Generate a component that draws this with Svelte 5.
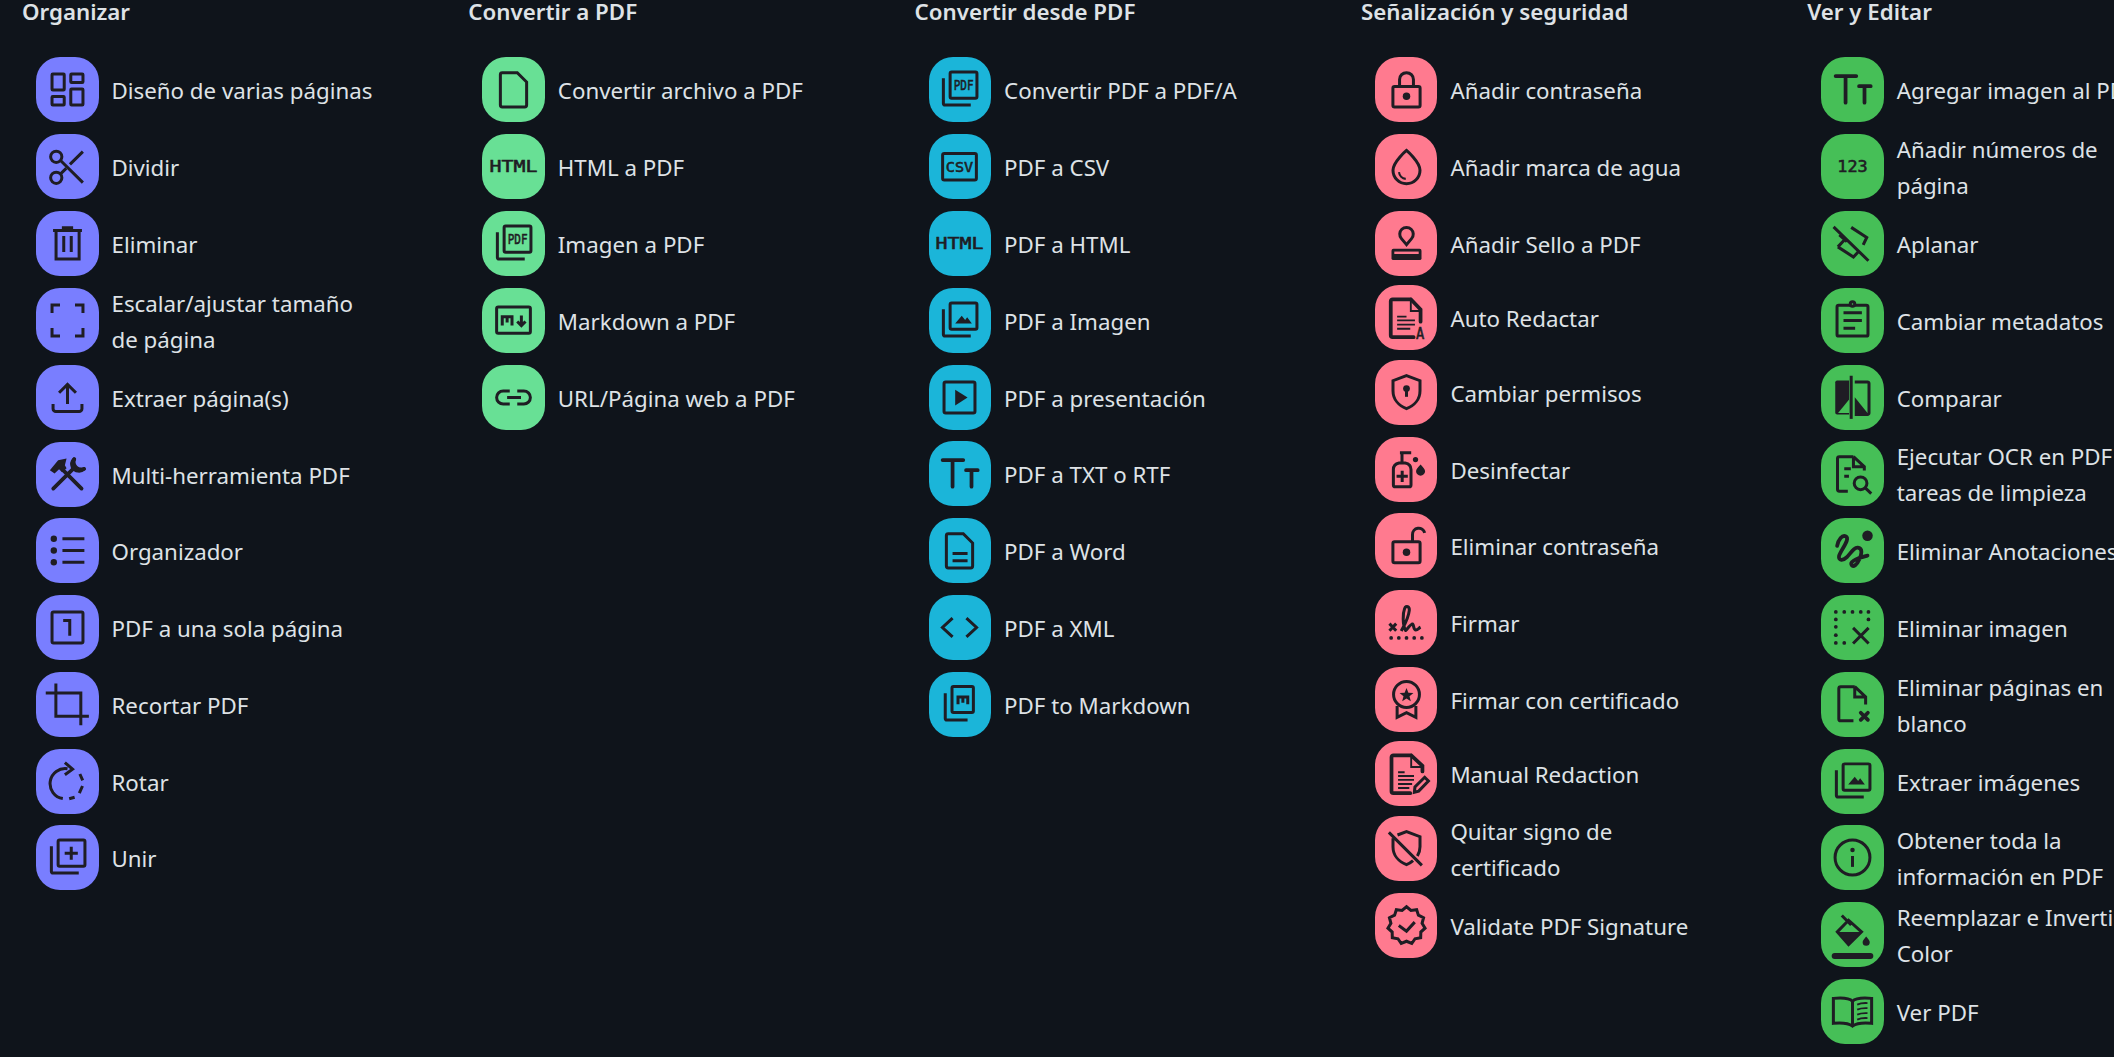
<script>
  // icons are drawn on a 24 unit grid, shown at 45px
  const stack = (inner = "") =>
    `<rect x="7" y="2.6" width="14.3" height="14" rx=".8"/><path d="M3.4 6v13.5a.8.8 0 0 0 .8.8H18"/>${inner}`;
  const mono = (s, y, len, size = 8.4, x = 12) =>
    `<text class="gl" x="${x}" y="${y}" font-size="${size}" textLength="${len}" lengthAdjust="spacingAndGlyphs">${s}</text>`;
  const doc =
    "M14 3H6a1 1 0 0 0-1 1v16.3a1 1 0 0 0 1 1h12a1 1 0 0 0 1-1V8L14 3Z";
  const shield =
    "M12 3l7.2 2.7V11c0 4.5-3 8-7.2 9.6C7.8 19 4.8 15.5 4.8 11V5.7L12 3Z";
  const textFields = `<path class="bold" d="M3 4.8h11M8.3 4.8V19M15.5 10.2h6.2M18.4 10.2V19"/>`;
  const mountain = `<path class="solid" d="M9.7 13.6l3.5-4.2 1.8 2.3 1.1-1.5 2.5 3.4Z"/>`;

  function badge() {
    let pts = [];
    for (let i = 0; i < 22; i++) {
      let r = i % 2 ? 8.4 : 10;
      let a = (i * Math.PI) / 11 - Math.PI / 2;
      pts.push((12 + r * Math.cos(a)).toFixed(2) + " " + (12 + r * Math.sin(a)).toFixed(2));
    }
    return `<path d="M${pts.join("L")}Z"/><path d="M7.9 12l4.1 3 4.4-4.8"/>`;
  }

  function dots(list) {
    return list.map(([x, y]) => `<circle class="solid" cx="${x}" cy="${y}" r="1"/>`).join("");
  }

  const icons = {
    dashboard: `<rect x="3.75" y="3.75" width="6.5" height="8.5" rx=".4"/><rect x="13.75" y="3.75" width="6.5" height="4.5" rx=".4"/><rect x="3.75" y="15.75" width="6.5" height="4.5" rx=".4"/><rect x="13.75" y="11.75" width="6.5" height="8.5" rx=".4"/>`,
    scissors: `<circle cx="6" cy="6.8" r="3"/><circle cx="6" cy="18" r="3"/><path d="M8.3 8.8L20.2 20.6M8.3 15.9l3-2.9M13.3 10.9l6.9-6.8"/>`,
    trash: `<path d="M5.9 5.2v15h12.3V5.2M4.3 5h15.4M9 3.6h6M10 8v8.5M14 8v8.5"/>`,
    cropFree: `<path d="M3.75 8V3.75H8M16 3.75h4.25V8M20.25 16v4.25H16M8 20.25H3.75V16"/>`,
    upload: `<path d="M12 15.5V5.5M7.5 9.5L12 5l4.5 4.5M4.3 15.5V18a1.5 1.5 0 0 0 1.5 1.5h12.4a1.5 1.5 0 0 0 1.5-1.5v-2.5"/>`,
    tools: `<path class="bold" d="M4.4 19.5L15 9M19.5 19.5L9.5 9.5M15.6 3.8a4 4 0 0 0 5.2 5.2"/><path class="bold" d="M15.6 3.8a4 4 0 0 0-.8 4.4a4 4 0 0 0 6 .8"/><path class="solid" d="M2.6 9.7L7 4.4l4.5-.9-.9 3.5 .9 1.6-2.4 2.2-1.6-1.6-2.4 2.3Z"/>`,
    list: `<circle class="solid" cx="4.7" cy="5.7" r="1.7"/><circle class="solid" cx="4.7" cy="12" r="1.7"/><circle class="solid" cx="4.7" cy="18.3" r="1.7"/><path d="M9.3 5.7H21M9.3 12H21M9.3 18.3H21"/>`,
    one: `<rect x="3.75" y="3.75" width="16.5" height="16.5" rx=".8"/><path d="M9.7 8.3h3.5v8.1"/>`,
    crop: `<path d="M5.8.8v17.4h17.6M.4 5.8h18.7V23"/>`,
    rotate: `<path d="M12 5.2a8 8 0 0 0-2.5 15.9M12.9 21.2l2.9-.8M18.3 18.2l1.7-3.8M20.1 11.4l-1.5-3.4M10.6 1.9l4.1 3.5-4.1 3"/>`,
    merge: stack(`<path d="M14 6.2v7M10.5 9.7h7"/>`),
    file: `<path d="${doc}"/>`,
    html: mono("HTML", 14.9, 25.6, 8.2),
    pdf: stack(mono("PDF", 12.4, 10.6, 7.6, 14.2)),
    markdown: `<rect x="3" y="4.75" width="18" height="14" rx=".9"/><path d="M6 14.6V10h5.2v4.6M8.6 10v3M16.2 9.3v5.2M14 12.5l2.2 2.2 2.2-2.2"/>`,
    link: `<path d="M10 8.5H6.5a3.5 3.5 0 0 0 0 7H10M14 8.5h3.5a3.5 3.5 0 0 1 0 7H14M8.6 12h7.4"/>`,
    csv: `<rect x="3" y="5" width="18" height="14.2" rx=".9"/>` + mono("CSV", 15, 14.6, 7.8),
    image: stack(mountain),
    slideshow: `<rect x="3.75" y="3.75" width="16.5" height="16.5" rx=".9"/><path class="solid" d="M9.7 7.9l6.6 4.1-6.6 4.3Z"/>`,
    textFields,
    word: `<path d="${doc}"/><path d="M8.3 13.6h8M8.3 17.5h8"/>`,
    code: `<path d="M8.3 7L2.9 12l5.4 5M15.7 7l5.4 5-5.4 5"/>`,
    pdfMd: `<rect x="8" y="2.4" width="11.4" height="13.8" rx=".8"/><path d="M4.4 6v13.5a.8.8 0 0 0 .8.8H16.3M11.2 11.8V8h5.2v3.8M13.8 8v3"/>`,
    lock: `<rect x="4.75" y="10.4" width="14.5" height="10.9" rx=".9"/><path d="M8.3 10.4V6.7a3.7 3.7 0 0 1 7.4 0v3.7"/><circle class="solid" cx="12" cy="15.6" r="2"/>`,
    drop: `<path d="M12 3.4S4.8 9.5 4.8 14a7.2 7.2 0 0 0 14.4 0C19.2 9.5 12 3.4 12 3.4Z"/><path d="M8 15a4 4 0 0 0 3.6 3.6" stroke-width="1.1"/>`,
    stamp: `<path d="M12 12.6L9.3 9.4a3.6 3.6 0 1 1 5.4 0Z"/><rect class="solid" x="4" y="14.8" width="16" height="6" rx="1"/><rect class="tone" x="5.5" y="16.3" width="13" height="1.3"/>`,
    autoRedact: `<path class="bold" d="M14.3 2.3H4.6a1 1 0 0 0-1 1v18.2a1 1 0 0 0 1 1h11.2M14.3 2.3l5.2 5.4v6.5"/><path class="thin" d="M14.3 2.3v6.2h5.2M7 11.5h5M7 13.5h9.5M7 15.8h9.5M7 18h7"/>` + mono("A", 23.6, 4.4, 8.2, 19.2),
    shieldKey: `<path d="${shield}"/><circle class="solid" cx="12" cy="9.9" r="1.8"/><path class="solid" d="M11.2 10h1.6v4.3h-1.6Z"/>`,
    sanitizer: `<path d="M6 21.2a1 1 0 0 1-1-1V12c0-2 1.4-3.2 3-3.5h3.3c1.7.3 3.1 1.5 3.1 3.5v8.2a1 1 0 0 1-1 1ZM8.5 3h6M9.6 3v5.5M9.7 12.6v6M6.7 15.6h6"/><circle class="solid" cx="16.8" cy="6.7" r="1.4"/><path class="solid" d="M19.5 9.3c1.4 1.5 2.4 2.5 2.4 3.6a2.4 2.4 0 0 1-4.8 0c0-1.1 1-2.1 2.4-3.6Z"/>`,
    lockOpen: `<rect x="4.75" y="10" width="14.5" height="11.2" rx=".9"/><path d="M15.2 10V6.2a3.3 3.3 0 0 1 6.5-.9"/><circle class="solid" cx="12" cy="15.6" r="2"/>`,
    signature: `<path d="M2.9 12.6l3.6 3.8M6.5 12.6l-3.6 3.8M9.2 16.5c1.3-2.5 3.8-6.5 4.3-11 .2-2-1.7-3-2.5-1-1 2.5-1.2 8.5.5 11.7.3.3 2-2.7 3.5-3.4 1-.3.5 3.2 2 3.2 1 0 1.5-1 2.500-1.500"/>` + dots([[3.8, 20.2], [7.9, 20.2], [12, 20.2], [16.1, 20.2], [20.2, 20.2]]),
    premium: `<circle cx="12" cy="9.3" r="6.9"/><path class="solid" d="M12 5.800l1 2.600 2.700.1-2.100 1.700.7 2.700-2.300-1.500-2.300 1.500.7-2.700-2.100-1.700 2.700-.1Z"/><path d="M7 15.500v6l5-2.500 5 2.500v-6"/>`,
    manual: `<path class="bold" d="M14.500 2.300H5a1 1 0 0 0-1 1v18.200a1 1 0 0 0 1 1h9M14.500 2.300l6 5.600v3"/><path class="thin" d="M14.500 2.300v6.200h6M7.500 11.300h3.500M7.500 13.300h8.500M7.500 15.400h8.500M7.500 17.600h7.500M7.500 19.700h6"/><path d="M16.200 22l.3-2.800 5.200-5.200 2 2-5.200 5.400Z"/>`,
    noShield: `<path d="M7.200 4.800L12 3l7.200 2.700V11c0 1.800-.5 3.500-1.400 5M15.500 18.500c-1 .9-2.200 1.600-3.500 2.100C7.800 19 4.800 15.500 4.800 11V6.500M2.600 3.400l17.600 17.600"/>`,
    verified: badge(),
    page123: mono("123", 14.9, 16.2, 8.2),
    flatten: `<path d="M1.900 3.100L20.500 21.200M11.300 3.400L19.600 8.800 17.700 12.700M4.200 13.800l8.300 5.400 3-3.200M5 7.400l4 3.600M4.200 13.800l3.200-3.400"/>`,
    clipboard: `<rect x="3.750" y="3.900" width="16.500" height="16.400" rx=".9"/><circle class="tone-stroke" cx="12" cy="3.200" r="1.200"/><path d="M7.200 7.900H17M7.200 12H17M7.200 16.100h6.200"/>`,
    compare: `<path class="solid" d="M10.200 2.900H3.800a1 1 0 0 0-1 1V20a1 1 0 0 0 1 1h6.400Z"/><path class="tone" d="M4.300 20.300L10.200 13v7.300Z"/><path d="M13.200 3.700h6.800a.8.8 0 0 1 .8.8v15.700a.8.8 0 0 1-.8.8h-6.800"/><path class="solid" d="M13.200 11.800l6.800 8.500h-6.800Z"/><path d="M11.300.4v23"/>`,
    ocr: `<path d="M12.500 3H5a1 1 0 0 0-1 1v16.400a1 1 0 0 0 1 1h4.500M12.500 3l5.800 5.400v2M12.500 3v5.400h5.800M7.600 9.500h3.500M7.600 13.500h2.500"/><circle cx="16.300" cy="17.200" r="3.400"/><path d="M18.800 19.700l3.200 3"/>`,
    gesture: `<circle class="solid" cx="20" cy="4.100" r="2.800"/><path class="bold" d="M3.800 9.500c.7-3.500 2.700-6 4.700-5 2.500 1.500-3 7.500-3.700 10.500-.4 2.500 2.200 2.500 4.200.5s4-5.500 6-5c2.500.5 2 3.500.5 6.500-1 2.500-3 4-4 2.800-1-1.300 1-3.300 8.500-5.100"/>`,
    selectX: dots([[3.1, 3.700], [7.600, 3.700], [12, 3.700], [16.400, 3.700], [20.500, 3.700], [3.100, 7.700], [20.500, 7.700], [3.100, 11.600], [3.100, 16.100], [3.100, 20.200], [7.600, 20.200]]) + `<path d="M12.300 12.200l8.300 8.300M20.600 12.200l-8.300 8.300"/>`,
    blank: `<path d="M13.200 2.500H5.700a1 1 0 0 0-1 1v16.200a1 1 0 0 0 1 1h6.800M13.200 2.500l5.800 5.500v4M13.200 2.500v5.500H19"/><path class="bold" d="M16.400 16.400l3.800 3.800M20.200 16.400l-3.800 3.800"/>`,
    info: `<circle cx="12" cy="12" r="9.300"/><path d="M12 11.200V17"/><circle class="solid" cx="12" cy="8" r="1.200"/>`,
    fill: `<path d="M6.300 1.900l5 5M9.900 4.400L3.900 10.600l6 6.800 6.900-6.800Z"/><path class="solid" d="M3.900 10.600h12.900l-6.900 6.800Z"/><path class="solid" d="M19.300 13c1.100 1.300 1.900 2.200 1.900 3.100a1.900 1.900 0 0 1-3.800 0c0-.9.800-1.800 1.900-3.100Z"/><path d="M2.500 23.400h19" stroke-width="3.200" stroke-linecap="round"/>`,
    book: `<path d="M12 6.500C10.500 5 7 4.500 1.800 5v13.300c5.200-.5 8.200 0 10.200 1.500 2-1.500 5-2 10.200-1.500V5C17 4.500 13.500 5 12 6.500ZM12 6.500v13"/><path class="thin" d="M14.500 8.300c1.500-.7 3.500-.9 5.500-.8M14.500 11c1.500-.7 3.500-.9 5.500-.8M14.500 13.700c1.500-.7 3.500-.9 5.500-.8M14.500 16.300c1.500-.7 3.500-.9 5.500-.8"/>`,
  };

  const columns = [
    {
      title: "Organizar",
      tone: "#797eff",
      items: [
        { label: "Diseño de varias páginas", icon: "dashboard" },
        { label: "Dividir", icon: "scissors" },
        { label: "Eliminar", icon: "trash" },
        { label: "Escalar/ajustar tamaño de página", icon: "cropFree" },
        { label: "Extraer página(s)", icon: "upload" },
        { label: "Multi-herramienta PDF", icon: "tools", h: 76 },
        { label: "Organizador", icon: "list" },
        { label: "PDF a una sola página", icon: "one" },
        { label: "Recortar PDF", icon: "crop" },
        { label: "Rotar", icon: "rotate", h: 76 },
        { label: "Unir", icon: "merge" },
      ],
    },
    {
      title: "Convertir a PDF",
      tone: "#68e095",
      items: [
        { label: "Convertir archivo a PDF", icon: "file" },
        { label: "HTML a PDF", icon: "html" },
        { label: "Imagen a PDF", icon: "pdf" },
        { label: "Markdown a PDF", icon: "markdown" },
        { label: "URL/Página web a PDF", icon: "link" },
      ],
    },
    {
      title: "Convertir desde PDF",
      tone: "#1bb5d9",
      items: [
        { label: "Convertir PDF a PDF/A", icon: "pdf" },
        { label: "PDF a CSV", icon: "csv" },
        { label: "PDF a HTML", icon: "html" },
        { label: "PDF a Imagen", icon: "image" },
        { label: "PDF a presentación", icon: "slideshow", h: 76 },
        { label: "PDF a TXT o RTF", icon: "textFields" },
        { label: "PDF a Word", icon: "word" },
        { label: "PDF a XML", icon: "code" },
        { label: "PDF to Markdown", icon: "pdfMd" },
      ],
    },
    {
      title: "Señalización y seguridad",
      tone: "#ff7a8f",
      items: [
        { label: "Añadir contraseña", icon: "lock" },
        { label: "Añadir marca de agua", icon: "drop" },
        { label: "Añadir Sello a PDF", icon: "stamp", h: 74 },
        { label: "Auto Redactar", icon: "autoRedact", h: 75 },
        { label: "Cambiar permisos", icon: "shieldKey" },
        { label: "Desinfectar", icon: "sanitizer", h: 76 },
        { label: "Eliminar contraseña", icon: "lockOpen" },
        { label: "Firmar", icon: "signature" },
        { label: "Firmar con certificado", icon: "premium", h: 74 },
        { label: "Manual Redaction", icon: "manual", h: 75 },
        { label: "Quitar signo de certificado", icon: "noShield" },
        { label: "Validate PDF Signature", icon: "verified" },
      ],
    },
    {
      title: "Ver y Editar",
      tone: "#46bf57",
      items: [
        { label: "Agregar imagen al PDF", icon: "textFields" },
        { label: "Añadir números de página", icon: "page123" },
        { label: "Aplanar", icon: "flatten" },
        { label: "Cambiar metadatos", icon: "clipboard" },
        { label: "Comparar", icon: "compare", h: 76 },
        { label: "Ejecutar OCR en PDF y tareas de limpieza", icon: "ocr" },
        { label: "Eliminar Anotaciones", icon: "gesture" },
        { label: "Eliminar imagen", icon: "selectX" },
        { label: "Eliminar páginas en blanco", icon: "blank" },
        { label: "Extraer imágenes", icon: "image", h: 76 },
        { label: "Obtener toda la información en PDF", icon: "info" },
        { label: "Reemplazar e Invertir Color", icon: "fill" },
        { label: "Ver PDF", icon: "book" },
      ],
    },
  ];
</script>

<div class="page">
  {#each columns as column}
    <section class="column" style:--tone={column.tone}>
      <h2>{column.title}</h2>
      {#each column.items as item}
        <a class="tool" href="#top" style:height={(item.h ?? 77) + "px"}>
          <span class="badge">
            <svg viewBox="0 0 24 24" width="45" height="45">{@html icons[item.icon]}</svg>
          </span>
          <span class="label"><span>{item.label}</span></span>
        </a>
      {/each}
    </section>
  {/each}
</div>

<style>
  :global(body) {
    margin: 0;
    background: #0f141b;
    overflow: hidden;
  }
  .page {
    display: flex;
    height: 1057px;
    overflow: hidden;
    padding-left: 22px;
    color: #dee2e6;
    font-family: "Noto Sans", "Liberation Sans", sans-serif;
  }
  .column {
    flex: 0 0 446.3px;
  }
  h2 {
    margin: 0 0 33px;
    height: 24px;
    font-size: 22.3px;
    line-height: 24px;
    font-weight: 600;
    white-space: nowrap;
  }
  .tool {
    display: flex;
    align-items: flex-start;
    gap: 13px;
    margin-left: 14px;
    color: inherit;
    text-decoration: none;
  }
  .badge {
    flex: 0 0 62.5px;
    height: 65px;
    display: flex;
    align-items: center;
    justify-content: center;
    border-radius: 24px;
    background: var(--tone);
  }
  .badge svg {
    display: block;
    overflow: visible;
    fill: none;
    stroke: #1f1d24;
    stroke-width: 1.6;
  }
  .label {
    height: 65px;
    width: 262px;
    flex: none;
    display: flex;
    align-items: center;
    padding-top: 1.5px;
    font-size: 22.3px;
    line-height: 36px;
  }
  .badge svg :global(.solid) {
    fill: #1f1d24;
    stroke: none;
  }
  .badge svg :global(.bold) {
    stroke-width: 2;
    stroke-linecap: round;
  }
  .badge svg :global(.thin) {
    stroke-width: 1;
  }
  .badge svg :global(.tone) {
    fill: var(--tone);
    stroke: none;
  }
  .badge svg :global(.tone-stroke) {
    fill: var(--tone);
  }
  .badge svg :global(.gl) {
    fill: #1f1d24;
    stroke: #1f1d24;
    stroke-width: 0.3;
    font-family: "DejaVu Sans Mono", "Liberation Mono", monospace;
    font-weight: 400;
    text-anchor: middle;
  }
</style>
